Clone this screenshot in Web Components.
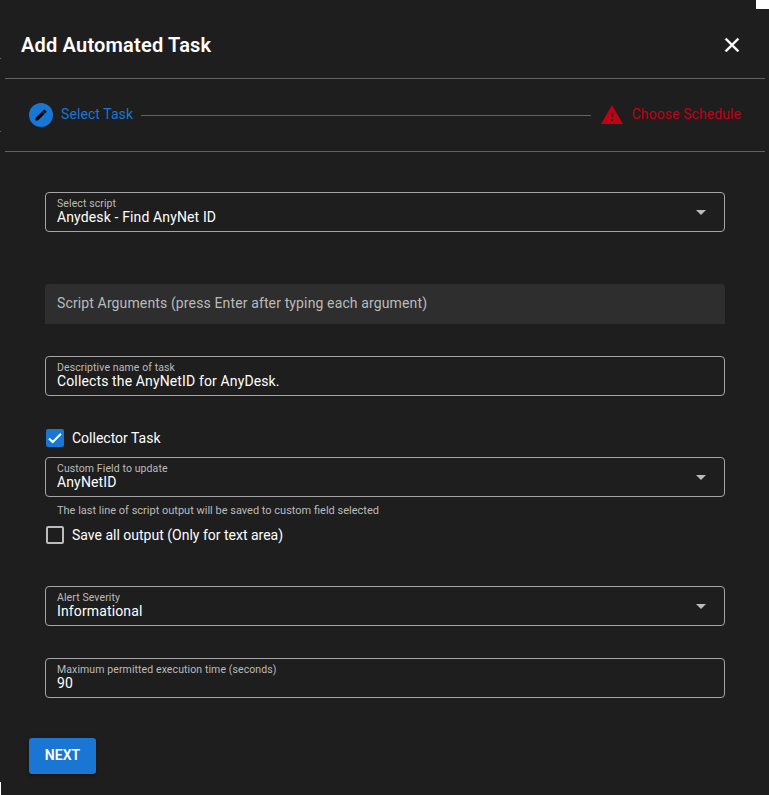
<!DOCTYPE html>
<html lang="en">
<head>
<meta charset="utf-8">
<title>Add Automated Task</title>
<style>
  html, body { margin: 0; height: 100%; background: #1e1e1e; overflow: hidden; }
  body { font: 14px/20px Roboto, "Noto Sans", sans-serif; color: #fff; }
</style>
</head>
<body>
<task-dialog>
  <dialog-header slot="header">Add Automated Task</dialog-header>
  <step-bar slot="steps">
    <step-tab kind="active">Select Task</step-tab>
    <step-tab kind="error">Choose Schedule</step-tab>
  </step-bar>
  <form-field label="Select script" dropdown>Anydesk - Find AnyNet ID</form-field>
  <filled-field style="margin-top:52px">Script Arguments (press Enter after typing each argument)</filled-field>
  <form-field style="margin-top:32px" label="Descriptive name of task">Collects the AnyNetID for AnyDesk.</form-field>
  <check-box style="margin-top:32px" checked>Collector Task</check-box>
  <form-field style="margin-top:9px" label="Custom Field to update" dropdown hint="The last line of script output will be saved to custom field selected">AnyNetID</form-field>
  <check-box style="margin-top:8px">Save all output (Only for text area)</check-box>
  <form-field style="margin-top:41px" label="Alert Severity" dropdown>Informational</form-field>
  <form-field style="margin-top:32px" label="Maximum permitted execution time (seconds)">90</form-field>
  <action-button slot="actions">NEXT</action-button>
</task-dialog>
<script>
  const define = (name, render) => customElements.define(name, class extends HTMLElement {
    connectedCallback() {
      if (this.shadowRoot) return;
      this.attachShadow({ mode: 'open' }).innerHTML = render(this);
    }
  });

  define('task-dialog', () => `
    <style>
      :host { display: block; position: relative; box-sizing: border-box; width: 769px; height: 795px; padding: 0 4px 0 5px; background: #1e1e1e; }
      main { display: flex; flex-direction: column; padding: 40px 40px 0; }
      footer { display: flex; padding: 40px 24px 0; }
      .edge { position: absolute; background: #fff; }
      .corner { right: 0; top: 0; width: 13px; height: 9px; }
      .foot { left: 0; bottom: 0; width: 1px; height: 13px; }
      .tick { left: 0; width: 1px; height: 1px; background: #626262; }
    </style>
    <slot name="header"></slot>
    <slot name="steps"></slot>
    <main><slot></slot></main>
    <footer><slot name="actions"></slot></footer>
    <i class="edge corner"></i><i class="edge foot"></i>
    <i class="edge tick" style="top:58px"></i><i class="edge tick" style="top:131px"></i>`);

  define('dialog-header', () => `
    <style>
      :host { display: flex; box-sizing: border-box; height: 79px; padding: 12px 21px 0 16px; align-items: center; justify-content: space-between; border-bottom: 1px solid #626262; }
      h1 { margin: 0; font-size: 20px; line-height: 32px; font-weight: 600; letter-spacing: .19px; }
      svg { display: block; width: 24px; height: 24px; fill: #fff; stroke: #fff; stroke-width: .4; }
    </style>
    <h1><slot></slot></h1>
    <svg viewBox="0 0 24 24"><path d="M19 6.41 17.59 5 12 10.59 6.41 5 5 6.41 10.59 12 5 17.59 6.41 19 12 13.41 17.59 19 19 17.59 13.41 12z"/></svg>`);

  define('step-bar', () => `
    <style>
      :host { display: flex; box-sizing: border-box; height: 73px; padding: 0 24px; align-items: center; border-bottom: 1px solid #626262; }
      ::slotted([kind=active]) { flex: 1; }
    </style>
    <slot></slot>`);

  define('step-tab', el => {
    const active = el.getAttribute('kind') === 'active';
    return `
    <style>
      :host { display: flex; align-items: center; color: ${active ? '#1976d2' : '#c10015'}; }
      .dot { display: grid; place-items: center; width: 24px; height: 24px; margin-right: 8px; border-radius: 50%; background: ${active ? '#1976d2' : 'none'}; }
      svg { display: block; fill: ${active ? '#000' : '#c10015'}; }
      .line { flex: 1; height: 1px; margin: 1px 9px 0 8px; background: #626262; }
      .text { position: relative; top: -1px; letter-spacing: .08px; }
    </style>
    <span class="dot">${active
      ? '<svg width="14" height="14" viewBox="0 0 24 24" stroke="#000" stroke-width=".6"><path d="M3 17.25V21h3.75L17.81 9.94l-3.75-3.75L3 17.25zM20.71 7.04a1 1 0 0 0 0-1.41l-2.34-2.34a1 1 0 0 0-1.41 0l-1.83 1.83 3.75 3.75 1.83-1.83z"/></svg>'
      : '<svg width="24" height="24" viewBox="0 0 24 24"><path d="M1 21h22L12 2 1 21zm12-3h-2v-2h2v2zm0-4h-2v-4h2v4z"/></svg>'}</span>
    <span class="text"><slot></slot></span>${active ? '<span class="line"></span>' : ''}`;
  });

  define('form-field', el => `
    <style>
      :host { display: block; }
      .box { display: flex; box-sizing: border-box; height: 40px; padding: 0 11px; align-items: center; border: 1px solid #a5a5a5; border-radius: 4px; }
      .copy { flex: 1; padding-bottom: 4px; }
      .label { display: block; font-size: 10.5px; line-height: 14px; color: #bbb; letter-spacing: .1px; }
      .value { display: block; line-height: 12px; letter-spacing: .13px; }
      svg { display: block; width: 24px; height: 24px; fill: #bbb; }
      .hint { margin: 8px 12px 0; font-size: 11px; line-height: 12px; color: #bbb; }
    </style>
    <div class="box">
      <div class="copy"><span class="label">${el.getAttribute('label')}</span><span class="value"><slot></slot></span></div>
      ${el.hasAttribute('dropdown') ? '<svg viewBox="0 0 24 24"><path d="m7 10 5 5 5-5z"/></svg>' : ''}
    </div>
    ${el.hasAttribute('hint') ? `<div class="hint">${el.getAttribute('hint')}</div>` : ''}`);

  define('filled-field', () => `
    <style>
      :host { display: flex; box-sizing: border-box; height: 40px; padding: 0 12px 2px; align-items: center; color: #bbb; background: #2e2e2e; border-radius: 4px 4px 0 0; letter-spacing: .13px; }
    </style>
    <slot></slot>`);

  define('check-box', el => {
    const on = el.hasAttribute('checked');
    return `
    <style>
      :host { display: flex; height: 20px; align-items: center; }
      .mark { box-sizing: border-box; width: 18px; height: 18px; margin: 0 8px 0 1px; border: 2px solid ${on ? '#1976d2' : '#bbb'}; border-radius: 2px; background: ${on ? '#1976d2' : 'none'}; }
      svg { display: block; width: 14px; height: 14px; fill: none; stroke: #fff; stroke-width: 2; }
    </style>
    <span class="mark">${on ? '<svg viewBox="0 0 14 14"><path d="M1 7.5 4.7 11 13 2.8"/></svg>' : ''}</span>
    <span><slot></slot></span>`;
  });

  define('action-button', () => `
    <style>
      :host { display: flex; box-sizing: border-box; width: 67px; height: 36px; align-items: center; justify-content: center; padding-bottom: 2px; border-radius: 3px; background: #1976d2; font-weight: 600; letter-spacing: .1px; box-shadow: 0 1px 5px rgba(0,0,0,.2), 0 2px 2px rgba(0,0,0,.14), 0 3px 1px -2px rgba(0,0,0,.12); }
    </style>
    <slot></slot>`);
</script>
</body>
</html>
